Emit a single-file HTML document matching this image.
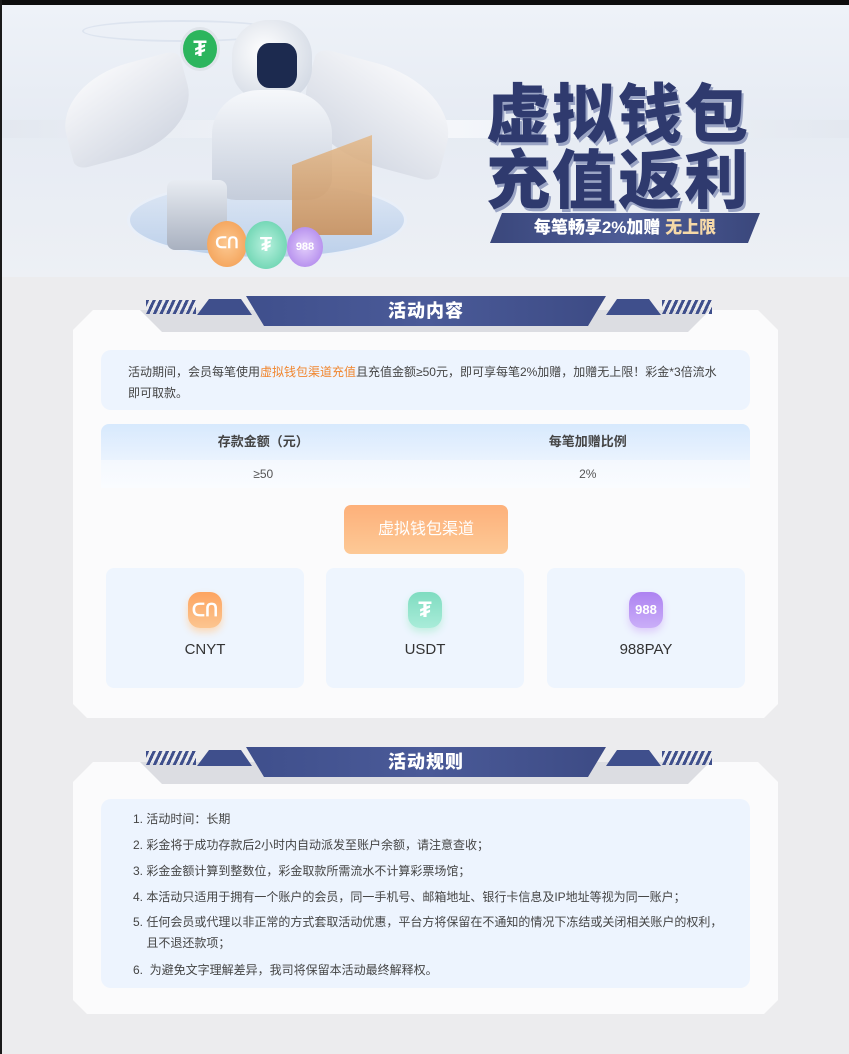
<!DOCTYPE html>
<html><head><meta charset="utf-8"><style>
*{margin:0;padding:0;box-sizing:border-box}
body{width:849px;height:1054px;background:#ececee;font-family:"Liberation Sans","Noto Sans CJK SC",sans-serif;position:relative;overflow:hidden;color:#333}
.abs{position:absolute}
.banner{left:2px;top:5px;width:847px;height:272px;background:linear-gradient(180deg,#eef2f8 0%,#e6ebf3 45%,#edf0f5 100%);overflow:hidden}
.bt{font-weight:900;color:#2f3a6e;font-size:64px;letter-spacing:2px;line-height:66px;font-family:"Noto Sans CJK SC",sans-serif;text-shadow:2px 3px 0 #9aa4c4}
.card{background:#fbfbfc;clip-path:polygon(0 20px,20px 0,calc(100% - 20px) 0,100% 20px,100% calc(100% - 14px),calc(100% - 14px) 100%,14px 100%,0 calc(100% - 14px))}
.tab{background:#dcdde2;clip-path:polygon(0 0,100% 0,calc(100% - 22px) 100%,22px 100%)}
.ttl{height:30px;background:linear-gradient(90deg,#3f4f8c,#4a5a98 50%,#3d4b85);clip-path:polygon(0 0,100% 0,calc(100% - 18px) 100%,18px 100%);color:#fff;font-weight:900;font-size:18px;text-align:center;line-height:30px;letter-spacing:1px}
.stripe{height:14px;background:repeating-linear-gradient(115deg,#3f4f8c 0 3px,transparent 3px 6px)}
.wing{height:16px;background:#3f4f8c}
.box{background:#edf4fe;border-radius:10px}
.pc{background:#eef5fe;border-radius:8px;text-align:center;font-size:15px;color:#333}
.ic{width:34px;height:36px;border-radius:12px;margin:24px auto 0;color:#fff;font-weight:bold;line-height:36px;font-size:18px}
li{list-style:none;font-size:12px;line-height:26px;color:#444}
</style></head><body>
<div class="abs" style="left:0;top:0;width:849px;height:5px;background:#0d0d0d"></div>
<div class="abs" style="left:0;top:0;width:2px;height:1054px;background:#1a1a1a"></div>
<div class="abs banner">
 <div class="abs" style="left:0;top:115px;width:847px;height:18px;background:linear-gradient(90deg,#e3e8f0,#f5f7fb,#e3e8f0)"></div>
 <div class="abs" style="left:80px;top:15px;width:200px;height:22px;border-radius:50%;border:2px solid #dde4ef"></div>
 <!-- wings -->
 <div class="abs" style="left:60px;top:60px;width:130px;height:90px;border-radius:60% 10% 60% 10%;background:linear-gradient(160deg,#fdfdfe,#cdd3df);transform:rotate(-15deg)"></div>
 <div class="abs" style="left:300px;top:60px;width:150px;height:100px;border-radius:10% 60% 10% 60%;background:linear-gradient(200deg,#fdfdfe,#cdd3df);transform:rotate(15deg)"></div>
 <!-- platform -->
 <div class="abs" style="left:125px;top:175px;width:280px;height:80px;border-radius:50%;background:linear-gradient(180deg,#dfe8f5,#bcd0ea);border:3px solid #e9eff8"></div>
 <!-- robot -->
 <div class="abs" style="left:230px;top:15px;width:80px;height:80px;border-radius:45% 45% 40% 40%;background:radial-gradient(circle at 40% 40%,#fff,#c9d1de)"></div>
 <div class="abs" style="left:255px;top:38px;width:40px;height:45px;border-radius:30%;background:#1c2a4f"></div>
 <div class="abs" style="left:210px;top:85px;width:120px;height:110px;border-radius:40% 40% 20% 20%;background:linear-gradient(180deg,#f6f8fb,#c5cddb)"></div>
 <div class="abs" style="left:178px;top:22px;width:40px;height:44px;border-radius:50%;background:#2cb55d;border:3px solid #dfe4ea;color:#fff;font-weight:bold;text-align:center;line-height:38px;font-size:22px">₮</div>
 <div class="abs" style="left:280px;top:130px;width:100px;height:100px;background:linear-gradient(180deg,#e3b98a,#c98d55);clip-path:polygon(10% 30%,90% 0,90% 100%,10% 100%);opacity:.85"></div>
 <div class="abs" style="left:165px;top:175px;width:60px;height:70px;border-radius:8px;background:linear-gradient(180deg,#e8ecf2,#a9b1c0)"></div>
 <div class="abs" style="left:205px;top:216px;width:40px;height:46px;border-radius:50%;background:radial-gradient(#fcc891,#f29a4c);color:#fff;text-align:center;line-height:46px;font-weight:bold">ᑕᑎ</div>
 <div class="abs" style="left:243px;top:216px;width:42px;height:48px;border-radius:50%;background:radial-gradient(#b8f1de,#59cda6);color:#fff;text-align:center;line-height:48px;font-weight:bold;font-size:20px">₮</div>
 <div class="abs" style="left:285px;top:222px;width:36px;height:40px;border-radius:50%;background:radial-gradient(#e2cdfb,#a77be9);color:#fff;text-align:center;line-height:40px;font-size:11px;font-weight:bold">988</div>
 <div class="abs bt" style="left:484px;top:72px">虚拟钱包</div>
 <div class="abs bt" style="left:484px;top:138px">充值返利</div>
 <div class="abs" style="left:488px;top:208px;width:270px;height:30px;background:linear-gradient(90deg,#3a477c,#4d5c96,#3a477c);clip-path:polygon(12px 0,100% 0,calc(100% - 12px) 100%,0 100%);color:#fff;font-weight:900;font-size:17px;line-height:30px;text-align:center">每笔畅享2%加赠 <span style="color:#f5d9a8">无上限</span></div>
</div>

<!-- section 1 -->
<div class="abs card" style="left:73px;top:310px;width:705px;height:408px"></div>
<div class="abs tab" style="left:140px;top:310px;width:570px;height:22px"></div>
<div class="abs stripe" style="left:146px;top:300px;width:50px"></div>
<div class="abs wing" style="left:197px;top:299px;width:55px;clip-path:polygon(12px 0,80% 0,100% 100%,0 100%)"></div>
<div class="abs wing" style="left:606px;top:299px;width:55px;clip-path:polygon(20% 0,calc(100% - 12px) 0,100% 100%,0 100%)"></div>
<div class="abs stripe" style="left:662px;top:300px;width:50px"></div>
<div class="abs ttl" style="left:246px;top:296px;width:360px">活动内容</div>
<div class="abs box" style="left:101px;top:350px;width:649px;height:60px;padding:12px 27px;font-size:12px;line-height:21px;color:#444">活动期间，会员每笔使用<span style="color:#f0862f">虚拟钱包渠道充值</span>且充值金额≥50元，即可享每笔2%加赠，加赠无上限！彩金*3倍流水即可取款。</div>
<div class="abs" style="left:101px;top:424px;width:649px;height:64px;border-radius:8px 8px 0 0;overflow:hidden;font-size:13px">
 <div style="height:36px;background:linear-gradient(180deg,#d7e9fd,#eaf3fe);display:flex;line-height:36px;font-weight:bold;color:#444"><div style="flex:1;text-align:center">存款金额（元）</div><div style="flex:1;text-align:center">每笔加赠比例</div></div>
 <div style="height:28px;background:linear-gradient(180deg,#f4f8fe,#fafcff);display:flex;line-height:28px;font-size:12px;color:#555"><div style="flex:1;text-align:center">≥50</div><div style="flex:1;text-align:center">2%</div></div>
</div>
<div class="abs" style="left:344px;top:505px;width:164px;height:49px;border-radius:7px;background:linear-gradient(180deg,#fdb07a,#fdc996);color:#fff;font-size:16px;text-align:center;line-height:49px">虚拟钱包渠道</div>
<div class="abs pc" style="left:106px;top:568px;width:198px;height:120px"><div class="ic" style="background:linear-gradient(180deg,#fda460,#fcc590);box-shadow:0 4px 8px #fcd9b6">ᑕᑎ</div><div style="margin-top:13px">CNYT</div></div>
<div class="abs pc" style="left:326px;top:568px;width:198px;height:120px"><div class="ic" style="background:linear-gradient(180deg,#7fdcc0,#a9ecd9);box-shadow:0 4px 8px #c3efe1;font-size:22px">₮</div><div style="margin-top:13px">USDT</div></div>
<div class="abs pc" style="left:547px;top:568px;width:198px;height:120px"><div class="ic" style="background:linear-gradient(180deg,#ad82f1,#caaef8);box-shadow:0 4px 8px #ddccfa;font-size:13px">988</div><div style="margin-top:13px">988PAY</div></div>

<!-- section 2 -->
<div class="abs card" style="left:73px;top:762px;width:705px;height:252px"></div>
<div class="abs tab" style="left:140px;top:762px;width:570px;height:22px"></div>
<div class="abs stripe" style="left:146px;top:751px;width:50px"></div>
<div class="abs wing" style="left:197px;top:750px;width:55px;clip-path:polygon(12px 0,80% 0,100% 100%,0 100%)"></div>
<div class="abs wing" style="left:606px;top:750px;width:55px;clip-path:polygon(20% 0,calc(100% - 12px) 0,100% 100%,0 100%)"></div>
<div class="abs stripe" style="left:662px;top:751px;width:50px"></div>
<div class="abs ttl" style="left:246px;top:747px;width:360px">活动规则</div>
<div class="abs box" style="left:101px;top:799px;width:649px;height:189px;padding:7px 0 0 32px">
<ul>
<li>1. 活动时间：长期</li>
<li>2. 彩金将于成功存款后2小时内自动派发至账户余额，请注意查收；</li>
<li>3. 彩金金额计算到整数位，彩金取款所需流水不计算彩票场馆；</li>
<li>4. 本活动只适用于拥有一个账户的会员，同一手机号、邮箱地址、银行卡信息及IP地址等视为同一账户；</li>
<li style="line-height:21px;padding:2px 0 3px">5. 任何会员或代理以非正常的方式套取活动优惠，平台方将保留在不通知的情况下冻结或关闭相关账户的权利，<br>&nbsp;&nbsp;&nbsp;&nbsp;且不退还款项；</li>
<li>6.&nbsp; 为避免文字理解差异，我司将保留本活动最终解释权。</li>
</ul></div>
</body></html>
